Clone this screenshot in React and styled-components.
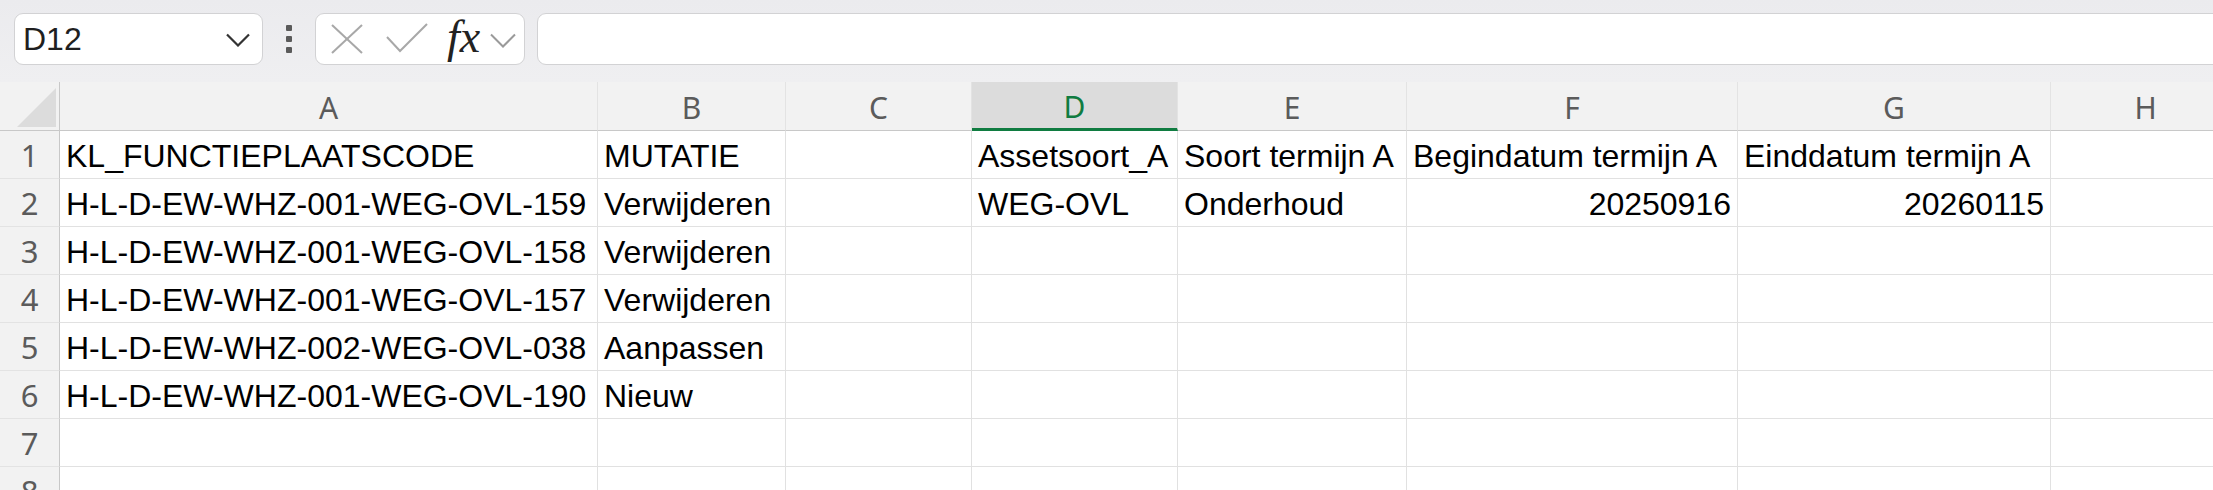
import React from 'react';
import styled, { createGlobalStyle } from 'styled-components';

const GlobalStyle = createGlobalStyle`
  html, body {
    margin: 0;
    padding: 0;
    background: #ffffff;
    overflow: hidden;
  }
  body {
    font-family: "Liberation Sans", Arial, sans-serif;
  }
`;

const columns = [
  { key: 'A', width: 538 },
  { key: 'B', width: 188 },
  { key: 'C', width: 186 },
  { key: 'D', width: 206 },
  { key: 'E', width: 229 },
  { key: 'F', width: 331 },
  { key: 'G', width: 313 },
  { key: 'H', width: 190 },
];

const rows = [
  ['KL_FUNCTIEPLAATSCODE', 'MUTATIE', '', 'Assetsoort_A', 'Soort termijn A', 'Begindatum termijn A', 'Einddatum termijn A', ''],
  ['H-L-D-EW-WHZ-001-WEG-OVL-159', 'Verwijderen', '', 'WEG-OVL', 'Onderhoud', 20250916, 20260115, ''],
  ['H-L-D-EW-WHZ-001-WEG-OVL-158', 'Verwijderen', '', '', '', '', '', ''],
  ['H-L-D-EW-WHZ-001-WEG-OVL-157', 'Verwijderen', '', '', '', '', '', ''],
  ['H-L-D-EW-WHZ-002-WEG-OVL-038', 'Aanpassen', '', '', '', '', '', ''],
  ['H-L-D-EW-WHZ-001-WEG-OVL-190', 'Nieuw', '', '', '', '', '', ''],
  ['', '', '', '', '', '', '', ''],
  ['', '', '', '', '', '', '', ''],
];

const selectedCol = 'D';

const App = () => {
  return (
    <>
      <GlobalStyle />
      <Page>
        <Toolbar>
          <NameBox>
            <span>D12</span>
            <svg width="24" height="14" viewBox="0 0 24 14">
              <polyline points="1,1.5 12,12.5 23,1.5" fill="none" stroke="#333" strokeWidth="2.2" />
            </svg>
          </NameBox>
          <Dots>
            <i />
            <i />
            <i />
          </Dots>
          <FormulaButtons>
            <svg width="32" height="30" viewBox="0 0 32 30">
              <line x1="1" y1="1" x2="31" y2="29" stroke="#a8a8a8" strokeWidth="2" />
              <line x1="31" y1="1" x2="1" y2="29" stroke="#a8a8a8" strokeWidth="2" />
            </svg>
            <svg width="42" height="30" viewBox="0 0 42 30">
              <polyline points="1,14 14,28 41,1" fill="none" stroke="#a8a8a8" strokeWidth="2" />
            </svg>
            <Fx>fx</Fx>
            <svg width="26" height="15" viewBox="0 0 26 15">
              <polyline points="1,1.5 13,13.5 25,1.5" fill="none" stroke="#9a9a9a" strokeWidth="2" />
            </svg>
          </FormulaButtons>
          <FormulaInput />
        </Toolbar>

        <Sheet $cols={columns.map((c) => c.width)}>
          <Corner>
            <Triangle />
          </Corner>
          {columns.map((c) => (
            <ColHeader key={c.key} $selected={c.key === selectedCol}>
              {c.key}
            </ColHeader>
          ))}
          {rows.map((row, r) => (
            <React.Fragment key={r}>
              <RowHeader>{r + 1}</RowHeader>
              {row.map((value, c) => (
                <Cell key={c} $numeric={typeof value === 'number'}>
                  {value}
                </Cell>
              ))}
            </React.Fragment>
          ))}
        </Sheet>
      </Page>
    </>
  );
};

const Page = styled.div`
  width: 2213px;
  height: 490px;
  overflow: hidden;
  background: #ffffff;
`;

const Toolbar = styled.div`
  height: 82px;
  box-sizing: border-box;
  padding: 13px 0 0 14px;
  display: flex;
  align-items: flex-start;
  background: linear-gradient(#ebebee, #efeff1);
`;

const Box = styled.div`
  height: 52px;
  box-sizing: border-box;
  background: #ffffff;
  border: 1px solid #d2d2d4;
  border-radius: 9px;
  display: flex;
  align-items: center;
`;

const NameBox = styled(Box)`
  width: 249px;
  padding: 0 12px 0 8px;
  justify-content: space-between;
  font-size: 32px;
  color: #1f1f1f;
  svg {
    margin-top: 2px;
  }
`;

const Dots = styled.div`
  width: 52px;
  height: 52px;
  display: flex;
  flex-direction: column;
  align-items: center;
  justify-content: center;
  gap: 5px;
  i {
    display: block;
    width: 6px;
    height: 6px;
    background: #5a5a5a;
    border-radius: 1px;
  }
`;

const FormulaButtons = styled(Box)`
  width: 210px;
  padding: 0 0 0 15px;
  svg:nth-child(1) {
    margin-top: -1px;
  }
  svg:nth-child(2) {
    margin-left: 23px;
    margin-top: -2px;
  }
  svg:nth-child(4) {
    margin-left: 10px;
    margin-top: 2px;
  }
`;

const Fx = styled.span`
  margin-left: 19px;
  font-family: "Liberation Serif", "Times New Roman", serif;
  font-style: italic;
  font-size: 46px;
  color: #222222;
  line-height: 1;
  margin-top: -4px;
`;

const FormulaInput = styled(Box)`
  flex: 1;
  margin-left: 12px;
  margin-right: -20px;
`;

const Sheet = styled.div`
  display: grid;
  grid-template-columns: 60px ${({ $cols }) => $cols.map((w) => `${w}px`).join(' ')};
  grid-template-rows: 49px;
  grid-auto-rows: 48px;
`;

const HeaderBase = styled.div`
  box-sizing: border-box;
  background: #f2f2f2;
  display: flex;
  align-items: center;
  justify-content: center;
  font-family: "Noto Sans", "Open Sans", sans-serif;
  color: #5b5b5b;
  white-space: nowrap;
  overflow: hidden;
`;

const Corner = styled(HeaderBase)`
  position: relative;
  border-right: 1px solid #c8c8c8;
  border-bottom: 1px solid #c8c8c8;
`;

const Triangle = styled.div`
  position: absolute;
  right: 3px;
  bottom: 3px;
  width: 39px;
  height: 39px;
  background: #dcdcdc;
  clip-path: polygon(100% 0, 100% 100%, 0 100%);
`;

const ColHeader = styled(HeaderBase)`
  font-size: 30px;
  padding-top: 2px;
  border-right: 1px solid #e3e3e3;
  border-bottom: ${({ $selected }) => ($selected ? '3px solid #107c41' : '1px solid #c8c8c8')};
  background: ${({ $selected }) => ($selected ? '#dcdcdc' : '#f2f2f2')};
  color: ${({ $selected }) => ($selected ? '#107c41' : '#5b5b5b')};
`;

const RowHeader = styled(HeaderBase)`
  font-size: 31px;
  border-right: 1px solid #c8c8c8;
  border-bottom: 1px solid #e3e3e3;
`;

const Cell = styled.div`
  box-sizing: border-box;
  border-right: 1px solid #e1e1e1;
  border-bottom: 1px solid #e1e1e1;
  padding: 3px 6px 0 6px;
  display: flex;
  align-items: center;
  justify-content: ${({ $numeric }) => ($numeric ? 'flex-end' : 'flex-start')};
  font-size: 32px;
  color: #000000;
  white-space: nowrap;
  overflow: visible;
`;

export default App;
